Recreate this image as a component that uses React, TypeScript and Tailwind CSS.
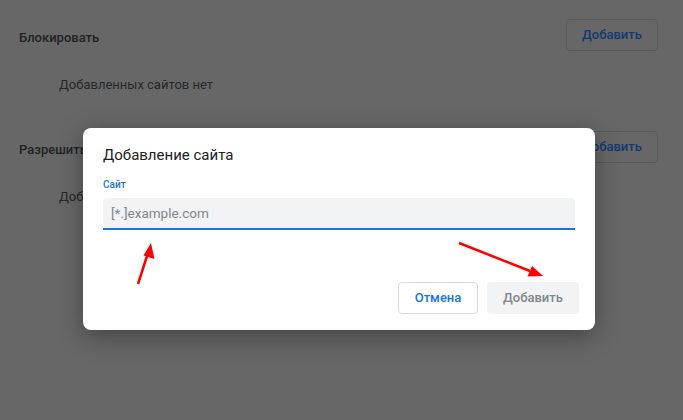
export default function App() {
  return (
    <div
      className="relative h-[420px] w-[683px] overflow-hidden bg-[#676767]"
      style={{ fontFamily: "Roboto, 'Noto Sans', sans-serif" }}
    >
      {/* dimmed settings page underneath */}
      <div className="flex flex-col pl-[19px] pr-[25px] pt-[19px]">
        <div className="flex h-[32px] items-center justify-between">
          <span className="pt-[6px] text-[13px] font-medium text-[#222324]">Блокировать</span>
          <button className="h-[32px] w-[92px] rounded-[4px] border border-[#5a5a5a] text-[13px] font-medium text-[#123a74]">
            Добавить
          </button>
        </div>
        <div className="flex h-[32px] items-center pl-[40px] pt-[34px] text-[13px] text-[#262728]">
          Добавленных сайтов нет
        </div>
        <div className="mt-[46px] flex h-[32px] items-center justify-between">
          <span className="pt-[6px] text-[13px] font-medium text-[#222324]">Разрешить</span>
          <button className="h-[32px] w-[92px] rounded-[4px] border border-[#5a5a5a] text-[13px] font-medium text-[#123a74]">
            Добавить
          </button>
        </div>
        <div className="flex h-[32px] items-center pl-[40px] pt-[34px] text-[13px] text-[#262728]">
          Добавленных сайтов нет
        </div>
      </div>

      {/* dialog */}
      <div className="absolute left-[83px] top-[128px] flex w-[512px] flex-col rounded-[8px] bg-white px-[20px] pb-[16px] pt-[17px] shadow-[0_6px_24px_rgba(0,0,0,0.35)]">
        <h2 className="text-[15px] leading-[20px] text-[#202124]">Добавление сайта</h2>
        <label className="mt-[13px] text-[10px] font-medium leading-[14px] text-[#1a73e8]">Сайт</label>
        <div className="mt-[6px] flex h-[32px] items-center rounded-t-[4px] border-b-2 border-[#1a73e8] bg-[#f1f3f4] px-[8px] text-[13.5px] text-[#80868b]">
          [*.]example.com
        </div>
        <div className="mt-[52px] flex justify-end gap-[9px]">
          <button className="h-[32px] w-[80px] rounded-[4px] border border-[#dadce0] bg-white text-[13px] font-medium text-[#1a73e8]">
            Отмена
          </button>
          <button className="-mr-[4px] h-[32px] w-[92px] rounded-[4px] bg-[#f1f3f4] text-[13px] font-medium text-[#80868b]">
            Добавить
          </button>
        </div>
      </div>

      {/* red annotation arrows */}
      <svg className="pointer-events-none absolute left-0 top-0" width="683" height="420">
        <line x1="138" y1="284" x2="147" y2="256" stroke="#ff0000" strokeWidth="2.5" />
        <polygon points="151,243 154.5,259 143.5,255.5" fill="#ff0000" />
        <line x1="459" y1="243" x2="530" y2="271" stroke="#ff0000" strokeWidth="2.5" />
        <polygon points="543,276 527.5,276.5 532,266" fill="#ff0000" />
      </svg>
    </div>
  );
}
